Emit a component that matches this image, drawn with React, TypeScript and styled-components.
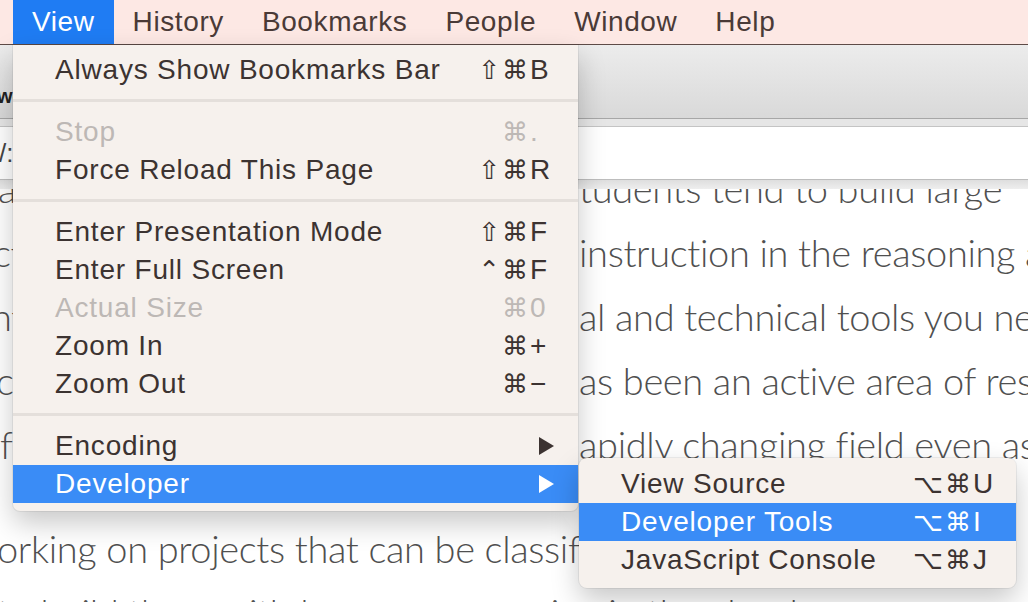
import React from "react";
import styled, { createGlobalStyle, css } from "styled-components";

const GlobalStyle = createGlobalStyle`
  html, body {
    margin: 0;
    padding: 0;
    width: 1028px;
    height: 602px;
    overflow: hidden;
    background: #ffffff;
  }
  #root {
    width: 1028px;
    height: 602px;
  }
`;

const menuFont = `"Liberation Sans", "DejaVu Sans", Arial, sans-serif`;

const Screen = styled.div`
  position: relative;
  width: 1028px;
  height: 602px;
  overflow: hidden;
  display: flex;
  flex-direction: column;
  background: #ffffff;
`;

const MenuBar = styled.div`
  flex: none;
  height: 44px;
  display: flex;
  padding-left: 13px;
  background: #fde8e4;
  border-bottom: 1px solid #5e4b47;
  font-family: ${menuFont};
  font-size: 28px;
  letter-spacing: 0.6px;
  color: #4a3a37;
`;

const MenuTitle = styled.div<{ $active?: boolean }>`
  position: relative;
  display: flex;
  align-items: center;
  padding: 0 19px;
  line-height: 44px;
  ${(p) =>
    p.$active &&
    css`
      background: #1f7cf3;
      color: #ffffff;
    `}
`;

const Toolbar = styled.div`
  flex: none;
  height: 73px;
  display: flex;
  align-items: center;
  background: linear-gradient(#ececec, #d9d9d9);
  border-bottom: 1px solid #a7a7a7;
  font-family: ${menuFont};
  font-weight: bold;
  font-size: 20px;
  color: #222;
`;

const TabLabel = styled.span`
  margin-left: -3px;
  margin-top: 30px;
`;

const TabStrip = styled.div`
  flex: none;
  height: 7px;
  background: #e6e6e6;
  border-bottom: 1px solid #c4c4c4;
`;

const AddressBar = styled.div`
  flex: none;
  height: 52px;
  display: flex;
  align-items: center;
  background: #ffffff;
  border-bottom: 1px solid #bdbdbd;
  font-family: ${menuFont};
  font-size: 26px;
  color: #444;
`;

const AddressText = styled.span`
  margin-left: -1px;
`;

const ShadeBand = styled.div`
  flex: none;
  height: 9px;
  background: linear-gradient(#dedede, #eeeeee);
`;

const Content = styled.div`
  flex: 1;
  overflow: hidden;
  font-family: Lato, "Open Sans", sans-serif;
  font-weight: 300;
  font-size: 38px;
  letter-spacing: -0.35px;
  color: #505050;
`;

const Paragraph = styled.div<{ $gap: number }>`
  margin-top: ${(p) => p.$gap}px;
`;

const Line = styled.div`
  height: 64px;
  line-height: 64px;
  white-space: nowrap;
  overflow: hidden;
`;

const SplitLine = styled(Line)`
  display: grid;
  grid-template-columns: 579px 1fr;
`;

const Cell = styled.span`
  overflow: hidden;
`;

const LeadCell = styled(Cell)<{ $shift: number }>`
  margin-left: ${(p) => p.$shift}px;
`;

const FullLine = styled(Line)`
  margin-left: -3px;
`;

/* ---------- menus ---------- */

const Dropdown = styled.div`
  position: absolute;
  top: calc(100% + 1px);
  left: 0;
  width: 565px;
  padding: 6px 0 8px;
  background: #f6f1ed;
  border-radius: 0 0 7px 7px;
  box-shadow: 0 12px 28px rgba(0, 0, 0, 0.22), 0 0 0 1px rgba(0, 0, 0, 0.06);
  font-family: ${menuFont};
  font-size: 28px;
  letter-spacing: 0.8px;
  z-index: 5;
`;

const Submenu = styled.div`
  position: absolute;
  top: -7px;
  left: calc(100% + 1px);
  width: 437px;
  padding: 7px 0 9px;
  background: #f6f1ed;
  border-radius: 8px;
  box-shadow: 0 12px 28px rgba(0, 0, 0, 0.22), 0 0 0 1px rgba(0, 0, 0, 0.06);
`;

const Row = styled.div<{ $active?: boolean; $disabled?: boolean; $sub?: boolean }>`
  position: relative;
  display: grid;
  grid-template-columns: 1fr auto ${(p) => (p.$sub ? "22px" : "24px")};
  align-items: center;
  height: 38px;
  line-height: 38px;
  padding: 0 ${(p) => (p.$sub ? "21px" : "24px")} 0 42px;
  color: #3c3331;
  white-space: nowrap;
  ${(p) =>
    p.$disabled &&
    css`
      color: #bdb8b5;
    `}
  ${(p) =>
    p.$active &&
    css`
      background: #3a8cf6;
      color: #ffffff;
    `}
`;

const Mods = styled.span`
  text-align: right;
  font-family: "DejaVu Sans", sans-serif;
  font-size: 26px;
  letter-spacing: 2px;
`;

const Key = styled.span`
  text-align: left;
`;

const ArrowBox = styled.span`
  display: flex;
  justify-content: flex-end;
  align-items: center;
`;

const Separator = styled.div`
  height: 3px;
  margin: 10px 0 11px;
  background: #e4dfdb;
`;

const Arrow = ({ color }: { color: string }) => (
  <svg width="15" height="18" viewBox="0 0 15 18">
    <polygon points="0,0 15,9 0,18" fill={color} />
  </svg>
);

type Item = {
  label: string;
  mods?: string;
  keyChar?: string;
  disabled?: boolean;
};

const MenuItem = ({ label, mods, keyChar, disabled }: Item) => (
  <Row $disabled={disabled}>
    <span>{label}</span>
    <Mods>{mods}</Mods>
    <Key>{keyChar}</Key>
  </Row>
);

const leftLines: [string, string, number][] = [
  ["a large share of s", "tudents tend to build large", -2],
  ["ct projects without", "instruction in the reasoning and", -7],
  ["nt the conceptual", "al and technical tools you need", -9],
  ["c program analysis", "as been an active area of research", -4],
  ["f a r", "apidly changing field even as", 0],
];

export default function App() {
  return (
    <>
      <GlobalStyle />
      <Screen>
        <MenuBar>
          <MenuTitle $active>
            View
            <Dropdown>
              <MenuItem label="Always Show Bookmarks Bar" mods="⇧⌘" keyChar="B" />
              <Separator />
              <MenuItem label="Stop" mods="⌘" keyChar="." disabled />
              <MenuItem label="Force Reload This Page" mods="⇧⌘" keyChar="R" />
              <Separator />
              <MenuItem label="Enter Presentation Mode" mods="⇧⌘" keyChar="F" />
              <MenuItem label="Enter Full Screen" mods="⌃⌘" keyChar="F" />
              <MenuItem label="Actual Size" mods="⌘" keyChar="0" disabled />
              <MenuItem label="Zoom In" mods="⌘" keyChar="+" />
              <MenuItem label="Zoom Out" mods="⌘" keyChar="−" />
              <Separator />
              <Row>
                <span>Encoding</span>
                <span />
                <ArrowBox>
                  <Arrow color="#3c3331" />
                </ArrowBox>
              </Row>
              <Row $active>
                <span>Developer</span>
                <span />
                <ArrowBox>
                  <Arrow color="#ffffff" />
                </ArrowBox>
                <Submenu>
                  <Row $sub>
                    <span>View Source</span>
                    <Mods>⌥⌘</Mods>
                    <Key>U</Key>
                  </Row>
                  <Row $sub $active>
                    <span>Developer Tools</span>
                    <Mods>⌥⌘</Mods>
                    <Key>I</Key>
                  </Row>
                  <Row $sub>
                    <span>JavaScript Console</span>
                    <Mods>⌥⌘</Mods>
                    <Key>J</Key>
                  </Row>
                </Submenu>
              </Row>
            </Dropdown>
          </MenuTitle>
          <MenuTitle>History</MenuTitle>
          <MenuTitle>Bookmarks</MenuTitle>
          <MenuTitle>People</MenuTitle>
          <MenuTitle>Window</MenuTitle>
          <MenuTitle>Help</MenuTitle>
        </MenuBar>
        <Toolbar>
          <TabLabel>wo</TabLabel>
        </Toolbar>
        <TabStrip />
        <AddressBar>
          <AddressText>/:</AddressText>
        </AddressBar>
        <ShadeBand />
        <Content>
          <Paragraph $gap={-33}>
            {leftLines.map(([l, r, s], i) => (
              <SplitLine key={i}>
                <LeadCell $shift={s}>{l}</LeadCell>
                <Cell>{r}</Cell>
              </SplitLine>
            ))}
          </Paragraph>
          <Paragraph $gap={40}>
            <FullLine>orking on projects that can be classified as very large program g</FullLine>
            <FullLine>to build them with large programming in the cloud.</FullLine>
          </Paragraph>
        </Content>
      </Screen>
    </>
  );
}
